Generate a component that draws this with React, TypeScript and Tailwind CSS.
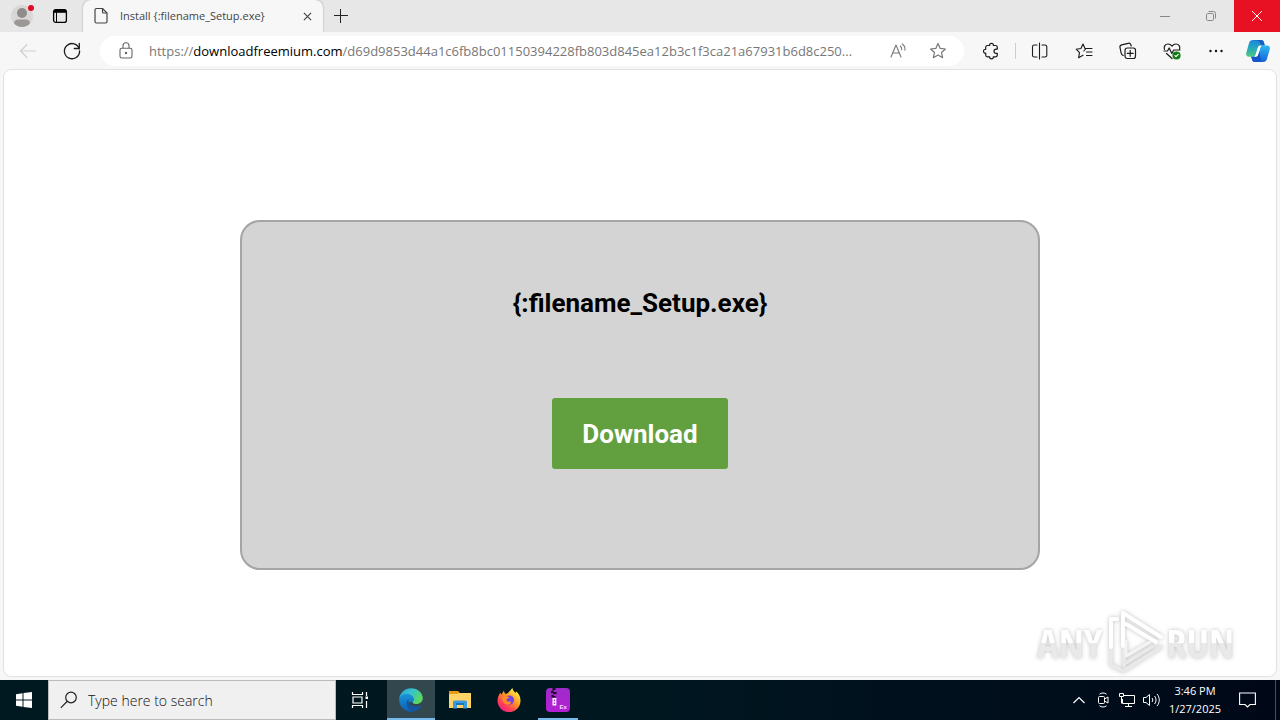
import type { ReactNode } from "react";

type IconProps = { children: ReactNode; size?: string; sw?: number };

function Icon({ children, size = "size-5", sw = 1.2 }: IconProps) {
  return (
    <svg viewBox="0 0 20 20" className={size} fill="none" stroke="currentColor" strokeWidth={sw} strokeLinecap="round" strokeLinejoin="round" aria-hidden="true">
      {children}
    </svg>
  );
}

const star = "M10 2.6l2.2 4.8 5.2.6-3.9 3.5 1.1 5.2L10 14.1l-4.6 2.6 1.1-5.2L2.6 8l5.2-.6z";

function ToolButton({ label, children, className = "w-11" }: { label: string; children: ReactNode; className?: string }) {
  return (
    <button type="button" aria-label={label} className={`flex h-8 shrink-0 items-center justify-center ${className}`}>
      {children}
    </button>
  );
}

function TitleBar() {
  return (
    <header className="flex h-8 shrink-0 items-stretch bg-[#e7e7e7]">
      <button type="button" aria-label="Profile" className="flex w-11 items-center justify-center">
        <svg viewBox="0 0 26 26" className="size-[26px]" aria-hidden="true">
          <circle cx="13" cy="13" r="11" fill="#d9d7d6" />
          <circle cx="13" cy="10" r="5" fill="#8f8c8a" />
          <path d="M5 20.2c0-2.5 2-3.7 4-3.7h8c2 0 4 1.2 4 3.7-2 2.5-5 3.8-8 3.8s-6-1.3-8-3.8z" fill="#9b9896" />
          <circle cx="22" cy="5" r="3" fill="#e00b1c" />
        </svg>
      </button>
      <button type="button" aria-label="Tab actions" className="flex w-8 items-center justify-center text-black">
        <svg viewBox="0 0 16 16" className="size-4" fill="none" stroke="currentColor" aria-hidden="true">
          <rect x="1.6" y="1.6" width="12.8" height="12.8" rx="2.2" strokeWidth="1.3" />
          <path d="M2 3.3h12" strokeWidth="3" />
          <path d="M4.5 4v10" strokeWidth="1" />
        </svg>
      </button>
      <div className="ml-[7px] flex w-60 items-center rounded-t-lg bg-[#f7f7f7] pl-[9px] pr-1 shadow-[0_0_2px_rgba(0,0,0,0.35)]">
        <svg viewBox="0 0 18 18" className="size-[18px] shrink-0 text-[#444]" fill="none" stroke="currentColor" strokeWidth="1.2" strokeLinejoin="round" aria-hidden="true">
          <path d="M4.5 1.5h6l4.5 4.5v8.5a1.5 1.5 0 0 1-1.5 1.5h-9A1.5 1.5 0 0 1 3 14.5V3a1.5 1.5 0 0 1 1.5-1.5z" />
          <path d="M10.5 1.5V5a1 1 0 0 0 1 1H15" />
        </svg>
        <span className="ml-2.5 flex-1 whitespace-nowrap text-[11px] leading-4 text-[#444]">{"Install {:filename_Setup.exe}"}</span>
        <button type="button" aria-label="Close tab" className="flex size-6 items-center justify-center text-[#444]">
          <svg viewBox="0 0 10 10" className="size-[9px]" stroke="currentColor" strokeWidth="1.3" aria-hidden="true"><path d="M1 1l8 8M9 1L1 9" /></svg>
        </button>
      </div>
      <button type="button" aria-label="New tab" className="flex w-9 items-center justify-center text-[#222]">
        <svg viewBox="0 0 14 14" className="size-[14px]" stroke="currentColor" aria-hidden="true"><path d="M6.5 0v14M0 6.5h14" /></svg>
      </button>
      <div className="ml-auto flex">
        <button type="button" aria-label="Minimize" className="flex w-[46px] items-center justify-center text-[#888]">
          <svg viewBox="0 0 10 10" className="size-[10px]" stroke="currentColor" aria-hidden="true"><path d="M0 5.5h10" /></svg>
        </button>
        <button type="button" aria-label="Restore" className="flex w-[46px] items-center justify-center text-[#888]">
          <svg viewBox="0 0 10 10" className="size-[10px]" fill="none" stroke="currentColor" aria-hidden="true">
            <rect x=".5" y="2.5" width="7" height="7" rx="1.2" /><path d="M2.5.5h5a2 2 0 0 1 2 2v5" />
          </svg>
        </button>
        <button type="button" aria-label="Close" className="flex w-[46px] items-center justify-center bg-[#e81123] text-white">
          <svg viewBox="0 0 10 10" className="size-[10px]" stroke="currentColor" aria-hidden="true"><path d="M0 0l10 10M10 0L0 10" /></svg>
        </button>
      </div>
    </header>
  );
}

function Toolbar() {
  return (
    <nav aria-label="Browser toolbar" className="flex h-[37px] shrink-0 items-center bg-[#f7f7f7] pl-1.5 pr-0.5 text-[#1b1b1b]">
      <div className="text-[#cfcfcf]">
        <ToolButton label="Back"><Icon><path d="M17.5 10H3M9 3.5L2.5 10 9 16.5" /></Icon></ToolButton>
      </div>
      <ToolButton label="Refresh"><Icon sw={1.3}><path d="M17.3 8A7.6 7.6 0 1 0 17.6 10M17.3 2.5V7.5h-5" /></Icon></ToolButton>
      <div className="ml-1.5 flex h-[30px] min-w-0 flex-1 items-center rounded-full bg-white pl-4 pr-1.5">
        <svg viewBox="0 0 20 20" className="size-5 shrink-0 text-[#666]" fill="none" stroke="currentColor" strokeWidth="1.1" aria-hidden="true">
          <rect x="4" y="7.2" width="12" height="9.8" rx="1.8" /><path d="M7 7V4.8a3 3 0 0 1 6 0V7" /><circle cx="10" cy="12" r=".7" fill="currentColor" />
        </svg>
        <p aria-label="Address" className="ml-[13px] min-w-0 flex-1 whitespace-nowrap text-[13px] leading-5 text-[#777]">
          https://<span className="text-black">downloadfreemium.com</span>/d69d9853d44a1c6fb8bc01150394228fb803d845ea12b3c1f3ca21a67931b6d8c250...
        </p>
        <div className="flex shrink-0 text-[#777]">
          <ToolButton label="Read aloud" className="w-10">
            <Icon sw={1.1}><path d="M3 16L8 4l5 12M4.8 12h6.4M12.3 5c1.2 1 1.6 2.3 1.4 3.8M14.3 3c2.2 1.7 3 4 2.6 6.2" /></Icon>
          </ToolButton>
          <ToolButton label="Add to favorites" className="w-10"><Icon><path d={star} /></Icon></ToolButton>
        </div>
      </div>
      <div className="ml-[5px] flex items-center">
        <ToolButton label="Extensions">
          <Icon sw={1.2}><path d="M6.5 4.5h2.2c-.3-1.2.5-2.2 1.8-2.2s2.1 1 1.8 2.2h2.2a1.8 1.8 0 0 1 1.8 1.8v1.8h-1.2a2.1 2.1 0 0 0 0 4.2h1.2V14a1.8 1.8 0 0 1-1.8 1.8h-2.2c.3 1.2-.5 2-1.8 2s-2.1-.8-1.8-2H6.5A1.8 1.8 0 0 1 4.7 14v-1.8C3.5 12.4 2.5 11.5 2.5 10.2s1-2.2 2.2-1.9v-2a1.8 1.8 0 0 1 1.8-1.8z" /></Icon>
        </ToolButton>
        <div className="mx-0.5 h-4 w-px bg-[#ccc]" />
        <ToolButton label="Split screen">
          <Icon sw={1.1}><path d="M9.5 2v16M7 4H4.3A1.8 1.8 0 0 0 2.5 5.8v8.4A1.8 1.8 0 0 0 4.3 16H7M12 4h3a1.8 1.8 0 0 1 1.8 1.8v8.4A1.8 1.8 0 0 1 15 16h-3" /></Icon>
        </ToolButton>
        <ToolButton label="Favorites">
          <Icon sw={1.1}><path d="M12 7.5h6M12.5 11H18M12.5 14.5H18M9 14.2l-4.4 2.6.9-5.2L2.2 8.2l4.7-.7L9 3l2 4.5H12M12 7.5L9.8 10" /></Icon>
        </ToolButton>
        <ToolButton label="Collections">
          <Icon sw={1.2}><path d="M5.2 14.5C4 14 3.4 13 3.1 11.8L2 6.5c-.3-1.3.4-2.4 1.7-2.7l6.5-1.5c1.3-.3 2.3.3 2.7 1.6l.3 1.1" /><rect x="7" y="7" width="10.5" height="10.5" rx="2.2" /><path d="M12.2 9.3v6M9.2 12.3h6" /></Icon>
        </ToolButton>
        <ToolButton label="Browser essentials">
          <Icon sw={1.2}>
            <path d="M2.4 8.3C1.6 5.5 3.2 3 6 3c1.8 0 3 .9 4 2.2C11 3.9 12.2 3 14 3c2.8 0 4.4 2.5 3.6 5.3M2 10h3.5l1.7-3 2.6 5.5 1.9-3.5H18M4.5 12.5L10 17.5" />
            <circle cx="14.5" cy="14.5" r="3.5" fill="#107c10" stroke="#107c10" /><path d="M12.9 14.6l1.1 1.1 2.2-2.3" stroke="white" />
          </Icon>
        </ToolButton>
        <ToolButton label="Settings and more">
          <svg viewBox="0 0 20 20" className="size-5" fill="#111" aria-hidden="true"><circle cx="4.5" cy="10" r="1.2" /><circle cx="10" cy="10" r="1.2" /><circle cx="15.5" cy="10" r="1.2" /></svg>
        </ToolButton>
        <ToolButton label="Copilot" className="w-10">
          <svg viewBox="0 0 24 24" className="size-6" aria-hidden="true">
            <defs>
              <linearGradient id="cpLeft" x1="0" y1="0" x2="0" y2="1"><stop offset="0" stopColor="#1b86dc" /><stop offset=".45" stopColor="#23a7c0" /><stop offset="1" stopColor="#51c981" /></linearGradient>
              <linearGradient id="cpRight" x1="0" y1="0" x2="0" y2="1"><stop offset="0" stopColor="#2cb9f0" /><stop offset="1" stopColor="#1663d8" /></linearGradient>
            </defs>
            <path d="M7 1h8c2 0 2.6 1.2 3.1 3l.7 2.5H15c-2 0-2.8 1-3.3 2.7L9.6 16c-.4 1.3-1 1.8-2.2 1.8H3c-2.4 0-3.3-1.7-2.7-4L3 4.2C3.6 2.1 4.8 1 7 1z" fill="url(#cpLeft)" />
            <path d="M7 1h8c2 0 2.6 1.2 3.1 3l.7 2.5H15l-1.5-3C13 2 12 1.5 10 1.5z" fill="#1a5fc4" />
            <path d="M17 23H9c-2 0-2.6-1.2-3.1-3l-.7-2.2H9c2 0 2.8-1 3.3-2.7L14.4 8.3c.4-1.3 1-1.8 2.2-1.8H21c2.4 0 3.3 1.7 2.7 4L21 19.8C20.4 21.9 19.2 23 17 23z" fill="url(#cpRight)" />
            <path d="M5.2 17.8H9c2 0 2.8-1 3.3-2.7l.9-2.8L15.5 23H9c-2 0-2.6-1.2-3.1-3z" fill="#1557c9" />
            <path d="M12 8.5c.4-1.3 1.2-2 3-2h1c-.8.3-1.2.9-1.6 2l-2.2 7c-.5 1.5-1.4 2.3-3.2 2.3h-1c.8-.3 1.3-.9 1.6-2z" fill="white" />
          </svg>
        </ToolButton>
      </div>
    </nav>
  );
}

const markText = "bg-linear-to-b from-white from-50% to-[#e9e9e9] to-50% bg-clip-text font-['Open_Sans_Condensed','Liberation_Sans_Narrow','Roboto_Condensed',sans-serif] text-[40px] leading-[52px] text-transparent";

function Watermark() {
  return (
    <div className="absolute bottom-0 right-[42px] flex items-center gap-0.5 drop-shadow-[0_0_2px_rgba(0,0,0,0.25)]">
      <span className={markText}>ANY</span>
      <svg viewBox="0 0 60 66" className="h-[66px] w-[60px]" fill="none" strokeLinecap="round" strokeLinejoin="round" aria-hidden="true">
        <path d="M7 36v19l4 2M11 57l8 4 38-24M20 36v20M20 54l28-17" stroke="#e9e9e9" strokeWidth="3.5" />
        <path d="M13 9H7v28M19 36V3l38 24M22 14l30 18" stroke="white" strokeWidth="4" />
        <path d="M22 31v15l24-14" stroke="#f4f4f4" strokeWidth="3" />
      </svg>
      <span className={markText}>RUN</span>
    </div>
  );
}

function WindowsTaskbar() {
  return (
    <footer className="flex h-10 shrink-0 items-stretch bg-linear-to-r from-[#001820] via-[#001720] to-[#000818] text-white">
      <button type="button" aria-label="Start" className="flex w-12 items-center justify-center">
        <svg viewBox="0 0 16 16" className="size-4" fill="white" aria-hidden="true"><path d="M0 2.2L6.5 1.3v6.2H0zM7.5 1.1L16 0v7.5H7.5zM0 8.5h6.5v6.2L0 13.8zM7.5 8.5H16V16l-8.5-1.1z" /></svg>
      </button>
      <label className="flex w-72 items-center border border-[#bbb] bg-[#f0f0f0] pl-[11px] text-[#222]">
        <svg viewBox="0 0 18 18" className="size-[18px] shrink-0" fill="none" stroke="currentColor" strokeWidth="1.2" aria-hidden="true"><circle cx="11" cy="6.5" r="5.3" /><path d="M7 10.5L.8 16.8" /></svg>
        <input type="text" aria-label="Search" placeholder="Type here to search" className="ml-2.5 min-w-0 flex-1 bg-transparent pt-px text-sm font-light outline-none placeholder:text-[#111]" />
      </label>
      <button type="button" aria-label="Task view" className="mr-[3px] flex w-12 items-center justify-center">
        <svg viewBox="0 0 18 18" className="size-[18px]" fill="none" stroke="white" strokeWidth="1.2" aria-hidden="true"><path d="M1.5 1v2.5h10V1M1.5 17v-2.5h10V17M2 6h9v6H2zM15.5 1v4M15.5 10v7" /><rect x="14.5" y="5.5" width="2.5" height="2.5" fill="white" stroke="none" /></svg>
      </button>
      <div className="flex gap-px">
        <button type="button" aria-label="Microsoft Edge" className="flex w-12 items-center justify-center border-b-2 border-[#76b9ed] bg-[#33474e] pt-0.5">
          <svg viewBox="0 0 24 24" className="size-6" aria-hidden="true">
            <defs>
              <linearGradient id="edTop" x1="0" y1="0" x2="1" y2=".5"><stop offset="0" stopColor="#2a9fd8" /><stop offset=".5" stopColor="#34c3cf" /><stop offset="1" stopColor="#5bd760" /></linearGradient>
              <linearGradient id="edLow" x1="0" y1="0" x2="0" y2="1"><stop offset="0" stopColor="#1b93dc" /><stop offset="1" stopColor="#0c5fae" /></linearGradient>
            </defs>
            <path d="M.2 11C.8 4.8 5.8.2 12 .2c6.8 0 11.8 4.8 11.8 9.8 0 3.6-2.8 6-6.2 6-2.8 0-4-.9-4-1.8 0-.7 1-1.2 1-3 0-2.4-2.4-4.4-6-4.4-3.5 0-6.8 1.4-8.4 4.2z" fill="url(#edTop)" />
            <path d="M.2 12C.6 8 4 6 8 6c3.9 0 6.6 2.3 6.6 5.2 0 1.8-1 2.3-1 3C9 12 7.5 20 15 23.4A11.9 11.9 0 0 1 .2 12z" fill="url(#edLow)" />
            <path d="M9.5 11c-4 3.2-1.5 11.5 5.5 12.4 3.3-.8 5.8-2.9 7.3-5.4.3-.5-.2-.9-.7-.6C16 20 8.5 17.5 9.5 11z" fill="#1554a0" />
          </svg>
        </button>
        <button type="button" aria-label="File Explorer" className="flex w-12 items-center justify-center">
          <svg viewBox="0 0 22 20" className="h-5 w-[22px]" aria-hidden="true">
            <path d="M0 1h9l2 2h10v3H0z" fill="#e99c13" /><path d="M0 4h8l2-1h12v15H0z" fill="#ffd366" /><path d="M4 18.5V12a1.5 1.5 0 0 1 1.5-1.5h11A1.5 1.5 0 0 1 18 12v6.5h-4V15H8v3.5z" fill="#3a9be0" /><path d="M7 13h8v2H7z" fill="#1b74b8" />
          </svg>
        </button>
        <button type="button" aria-label="Firefox" className="flex w-12 items-center justify-center">
          <svg viewBox="0 0 24 24" className="size-6" aria-hidden="true">
            <defs>
              <linearGradient id="ffBody" x1=".85" y1=".1" x2=".2" y2=".95"><stop offset="0" stopColor="#fff34a" /><stop offset=".4" stopColor="#ff9a23" /><stop offset=".75" stopColor="#ff4055" /><stop offset="1" stopColor="#f02088" /></linearGradient>
            </defs>
            <path d="M3.5 4.5c.2 1 .5 1.5 1 2L7 2.5c0 1.5.5 2.5 1.8 3.5C11 5.5 12 4 13 2.8 14 1.5 15 .5 15.5 0c.3 2.2 1.2 3.2 3.2 5 .3-.7.2-1.2.1-1.7 3.2 2 4.7 5.7 4.7 9.2A11.5 11.5 0 0 1 .5 12.8C.5 9.5 1.8 6.5 3.5 4.5z" fill="url(#ffBody)" />
            <circle cx="12.5" cy="12" r="4.6" fill="#7542e5" />
            <path d="M4.5 10C7 7.5 10.5 8 12.5 9.5c-1 .9-3 .7-3 2.3 0 1.4 1.2 2 2.7 1.8 1.6-.2 2.5.7 1.5 1.6-2.3 2.3-7 1-7.5-1.7z" fill="#ff8c24" />
          </svg>
        </button>
        <button type="button" aria-label="Archive tool" className="flex w-12 flex-col items-center justify-between pt-2">
          <svg viewBox="0 0 24 24" className="size-6" aria-hidden="true">
            <defs><linearGradient id="arBody" x1="0" y1="0" x2="0" y2="1"><stop offset="0" stopColor="#9d2bc8" /><stop offset="1" stopColor="#b51fd6" /></linearGradient></defs>
            <rect width="24" height="24" rx="4" fill="url(#arBody)" />
            <path d="M6.5 0h3v2h-2v2h3v2h-3v2h2v1.5H5.5V7h1.5V5H5V3h1.5z" fill="#160a1d" />
            <path d="M6.5 10h3.8v7.5H6.5z" fill="white" /><path d="M7.7 11.5h1.5v1.7H7.7zM7.7 14.5h1.5v1.5H7.7z" fill="#a525ca" />
            <text x="13.5" y="21" fontFamily="Liberation Sans, sans-serif" fontWeight="700" fontSize="6" fill="#f5d9ff">Ex</text>
          </svg>
          <span className="h-0.5 w-10 bg-[#76b9ed]" />
        </button>
      </div>
      <div className="ml-auto flex items-stretch">
        <button type="button" aria-label="Show hidden icons" className="flex w-6 items-center justify-center">
          <svg viewBox="0 0 12 8" className="h-2 w-3" fill="none" stroke="white" strokeWidth="1.2" aria-hidden="true"><path d="M.5 7L6 1.5 11.5 7" /></svg>
        </button>
        <button type="button" aria-label="Meet now" className="flex w-6 items-center justify-center">
          <svg viewBox="0 0 12 16" className="h-4 w-3" fill="none" stroke="white" aria-hidden="true"><rect x="1.5" y="4.5" width="6" height="7" rx="1" /><path d="M7.5 7l3.5-2v6L7.5 9M2.5 2.2c2-1.6 5-1.6 7 0M2.5 13.8c2 1.6 5 1.6 7 0" /></svg>
        </button>
        <button type="button" aria-label="Network" className="flex w-6 items-center justify-center">
          <svg viewBox="0 0 16 14" className="h-[14px] w-4" fill="none" stroke="white" aria-hidden="true"><path d="M5 2.5h10.5v8H3.5V6M9.5 10.5v3M6 13.5h7M.5.5h4v3h-4zM2.5 3.5v7" /></svg>
        </button>
        <button type="button" aria-label="Volume" className="flex w-6 items-center justify-center">
          <svg viewBox="0 0 17 14" className="h-[14px] w-[17px]" fill="none" stroke="white" aria-hidden="true"><path d="M.5 4.5H3l3.5-3v11L3 9.5H.5zM9 5c1 1.2 1 2.8 0 4M11.5 3c2 2.4 2 5.6 0 8M14 1c3 3.5 3 8.5 0 12" /></svg>
        </button>
        <time dateTime="2025-01-27T15:46" className="flex w-16 flex-col items-center justify-center text-[11px] leading-[18px]">
          <span>3:46 PM</span>
          <span>1/27/2025</span>
        </time>
        <button type="button" aria-label="Notifications" className="flex w-10 items-center justify-center">
          <svg viewBox="0 0 17 16" className="h-4 w-[17px]" fill="none" stroke="white" strokeWidth="1.1" aria-hidden="true"><path d="M.6 1h15.8v11.5H11l-2.5 2.5L6 12.5H.6z" /></svg>
        </button>
        <div className="ml-2 mr-1 w-px bg-[#46505c]" />
      </div>
    </footer>
  );
}

export default function App() {
  return (
    <div className="flex min-h-screen flex-col bg-[#f7f7f7] font-['Open_Sans','Noto_Sans',sans-serif]">
      <TitleBar />
      <Toolbar />
      <main className="relative mx-[3px] mb-[3px] flex flex-1 flex-col rounded-lg border border-[#e2e2e2] bg-white px-4 pt-[150px]">
        <section className="mx-auto flex h-[350px] w-full max-w-[800px] flex-col items-center rounded-[20px] border-2 border-[#a5a5a5] bg-[#d4d4d4] pt-[65px] font-[Roboto,sans-serif]">
          <h1 className="text-[26px] font-bold leading-8 text-black">{"{:filename_Setup.exe}"}</h1>
          <button type="button" className="mt-[79px] rounded-[3px] bg-[#62a03f] px-[30px] pb-[19px] pt-[21px] text-[26px] font-bold leading-[31px] text-white">Download</button>
        </section>
        <Watermark />
      </main>
      <WindowsTaskbar />
    </div>
  );
}
